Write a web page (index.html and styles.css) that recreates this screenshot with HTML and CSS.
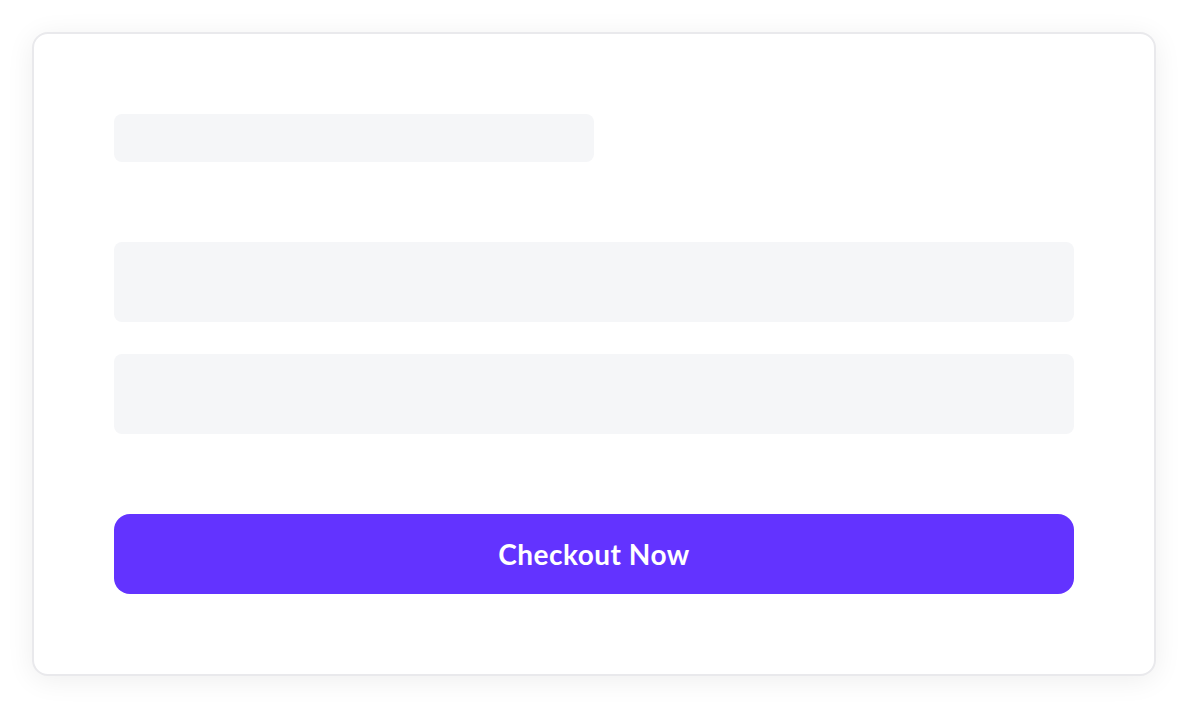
FILE: index.html
```html
<!DOCTYPE html>
<html lang="en">
<head>
    <meta charset="UTF-8">
    <meta name="viewport" content="width=device-width, initial-scale=1.0">
    <title>Checkout</title>
    <link rel="stylesheet" href="styles.css">
</head>
<body>
    <div class="page">
        <div class="card">
            <div class="skeleton title"></div>
            <div class="fields">
                <div class="skeleton field"></div>
                <div class="skeleton field"></div>
            </div>
            <button class="checkout">Checkout Now</button>
        </div>
    </div>
</body>
</html>
```

FILE: styles.css
```css
html, body {
    margin: 0;
    padding: 0;
    background-color: #ffffff;
}

body {
    font-family: Lato, "Open Sans", Arial, sans-serif;
}

.page {
    padding: 32px;
}

.card {
    display: flex;
    flex-direction: column;
    padding: 80px;
    background-color: #ffffff;
    border: 2px solid #e9e9ec;
    border-radius: 16px;
    box-shadow: 0 4px 28px rgba(0, 0, 0, 0.07);
}

.skeleton {
    background-color: #f5f6f8;
    border-radius: 8px;
}

.title {
    width: 480px;
    height: 48px;
}

.fields {
    display: flex;
    flex-direction: column;
    gap: 32px;
    margin-top: 80px;
}

.field {
    height: 80px;
}

.checkout {
    margin-top: 80px;
    height: 80px;
    background-color: #6333ff;
    color: #ffffff;
    border: none;
    border-radius: 16px;
    font-family: Lato, "Open Sans", Arial, sans-serif;
    font-size: 28px;
    font-weight: 700;
    letter-spacing: 0.5px;
    cursor: pointer;
}
```
